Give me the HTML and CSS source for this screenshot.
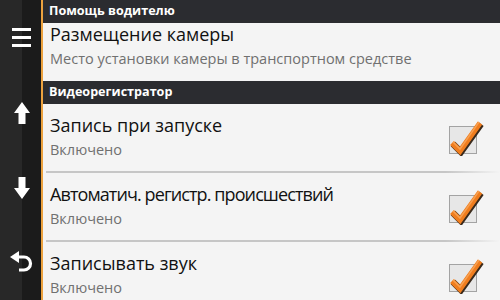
FILE: index.html
```html
<!DOCTYPE html>
<html lang="ru">
<head>
<meta charset="utf-8">
<link rel="stylesheet" href="styles.css">
</head>
<body>
<div class="screen">
  <nav class="sidebar">
    <div class="navbtn">
      <svg width="19" height="19" viewBox="0 0 19 19"><rect x="0" y="0" width="19" height="3" fill="#fff"/><rect x="0" y="8" width="19" height="3" fill="#fff"/><rect x="0" y="16" width="19" height="3" fill="#fff"/></svg>
    </div>
    <div class="navbtn">
      <svg width="16" height="22" viewBox="0 0 16 22"><path d="M8 0 L16 11 H11.5 V22 H4.5 V11 H0 Z" fill="#fff"/></svg>
    </div>
    <div class="navbtn">
      <svg width="16" height="22" viewBox="0 0 16 22"><path d="M8 22 L16 11 H11.5 V0 H4.5 V11 H0 Z" fill="#fff"/></svg>
    </div>
    <div class="navbtn">
      <svg width="23" height="23" viewBox="0 0 23 23"><path d="M0 6 L9 0 V12 Z" fill="#fff"/><path d="M8 6 H14 A6.5 6.5 0 0 1 14 19 H9" fill="none" stroke="#fff" stroke-width="3.2"/></svg>
    </div>
  </nav>
  <main class="content">
    <div class="section-head">Помощь водителю</div>
    <div class="item item-first">
      <div class="texts">
        <div class="title">Размещение камеры</div>
        <div class="sub">Место установки камеры в транспортном средстве</div>
      </div>
    </div>
    <div class="section-head">Видеорегистратор</div>
    <div class="item">
      <div class="texts">
        <div class="title">Запись при запуске</div>
        <div class="sub">Включено</div>
      </div>
      <svg class="check" width="38" height="38" viewBox="0 0 38 38"><rect x="3.5" y="8.5" width="27" height="27" fill="#e7e7e7" stroke="#a3a3a3"/><path d="M6 25 L14 33 L34 5" fill="none" stroke="#3a2a1c" stroke-width="6.5" transform="translate(1,1)"/><path d="M6 25 L14 33 L34 5" fill="none" stroke="#f07d1e" stroke-width="5.5"/><path d="M7 24 L14 31 L33 4" fill="none" stroke="#f8a050" stroke-width="1.5"/></svg>
    </div>
    <div class="sep"></div>
    <div class="item">
      <div class="texts">
        <div class="title title-tight">Автоматич. регистр. происшествий</div>
        <div class="sub">Включено</div>
      </div>
      <svg class="check" width="38" height="38" viewBox="0 0 38 38"><rect x="3.5" y="8.5" width="27" height="27" fill="#e7e7e7" stroke="#a3a3a3"/><path d="M6 25 L14 33 L34 5" fill="none" stroke="#3a2a1c" stroke-width="6.5" transform="translate(1,1)"/><path d="M6 25 L14 33 L34 5" fill="none" stroke="#f07d1e" stroke-width="5.5"/><path d="M7 24 L14 31 L33 4" fill="none" stroke="#f8a050" stroke-width="1.5"/></svg>
    </div>
    <div class="sep"></div>
    <div class="item">
      <div class="texts">
        <div class="title">Записывать звук</div>
        <div class="sub">Включено</div>
      </div>
      <svg class="check" width="38" height="38" viewBox="0 0 38 38"><rect x="3.5" y="8.5" width="27" height="27" fill="#e7e7e7" stroke="#a3a3a3"/><path d="M6 25 L14 33 L34 5" fill="none" stroke="#3a2a1c" stroke-width="6.5" transform="translate(1,1)"/><path d="M6 25 L14 33 L34 5" fill="none" stroke="#f07d1e" stroke-width="5.5"/><path d="M7 24 L14 31 L33 4" fill="none" stroke="#f8a050" stroke-width="1.5"/></svg>
    </div>
  </main>
</div>
</body>
</html>
```
FILE: styles.css
```css
html, body {
  margin: 0;
  padding: 0;
  width: 500px;
  height: 300px;
  overflow: hidden;
  background: #f4f4f4;
  font-family: "Open Sans", "DejaVu Sans", sans-serif;
}
.screen {
  display: flex;
  width: 500px;
  height: 300px;
}
.sidebar {
  width: 41px;
  flex: none;
  display: flex;
  flex-direction: column;
  background: linear-gradient(to right, #282828 0, #282828 22px, #1b1b1b 22px, #1b1b1b 100%);
  border-right: 2px solid #eca23f;
}
.navbtn {
  height: 75px;
  flex: none;
  display: flex;
  align-items: center;
  justify-content: center;
  padding-left: 2px;
}
.content {
  flex: 1;
  display: flex;
  flex-direction: column;
  background: #f4f4f4;
  min-width: 0;
  overflow: hidden;
}
.section-head {
  flex: none;
  height: 23px;
  box-sizing: border-box;
  padding-left: 6px;
  line-height: 21px;
  font-size: 12.6px;
  font-weight: 700;
  color: #ffffff;
  background: #2b2c30;
  white-space: nowrap;
}
.item {
  flex: none;
  height: 67px;
  box-sizing: border-box;
  display: flex;
  align-items: center;
  padding: 0 16px 2px 7px;
}
.item-first {
  height: 58px;
  align-items: flex-start;
  padding-top: 0;
}
.texts {
  flex: 1;
  min-width: 0;
  white-space: nowrap;
}
.title {
  font-size: 18px;
  line-height: 22px;
  color: #111111;
  margin-bottom: 5px;
}
.title-tight {
  letter-spacing: -0.9px;
}
.sub {
  font-size: 14.5px;
  line-height: 18px;
  color: #707070;
}
.check {
  flex: none;
  display: block;
}
.sep {
  flex: none;
  height: 2px;
  margin-left: 3px;
  background: linear-gradient(to right, #c6c6c6 0, #c6c6c6 88%, rgba(198,198,198,0) 100%);
}
```
